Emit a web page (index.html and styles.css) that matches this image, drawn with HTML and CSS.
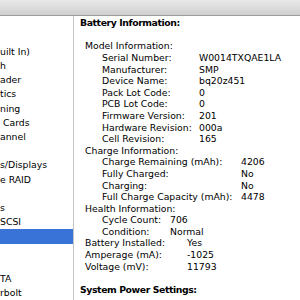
FILE: index.html
```html
<!DOCTYPE html>
<html lang="en">
  <head>
    <meta charset="UTF-8" />
    <meta name="viewport" content="width=device-width, initial-scale=1.0" />
    <title>System Information - Power</title>
    <link rel="stylesheet" href="styles.css">
  </head>
  <body>
    <div class="toolbar"></div>

    <div class="window">
      <ul class="sidebar">
        <li></li>
        <li>uilt In)</li>
        <li>h</li>
        <li>ader</li>
        <li>tics</li>
        <li>ning</li>
        <li>&nbsp;Cards</li>
        <li>annel</li>
        <li></li>
        <li>s/Displays</li>
        <li>e RAID</li>
        <li></li>
        <li>s</li>
        <li>SCSI</li>
        <li class="selected"></li>
        <li></li>
        <li></li>
        <li>TA</li>
        <li>rbolt</li>
      </ul>

      <div class="details">
        <h2>Battery Information:</h2>
        <div class="spacer"></div>

        <div class="group">
          <div class="group-title">Model Information:</div>
          <dl class="pairs model">
            <div class="row"><dt>Serial Number:</dt><dd>W0014TXQAE1LA</dd></div>
            <div class="row"><dt>Manufacturer:</dt><dd>SMP</dd></div>
            <div class="row"><dt>Device Name:</dt><dd>bq20z451</dd></div>
            <div class="row"><dt>Pack Lot Code:</dt><dd>0</dd></div>
            <div class="row"><dt>PCB Lot Code:</dt><dd>0</dd></div>
            <div class="row"><dt>Firmware Version:</dt><dd>201</dd></div>
            <div class="row"><dt>Hardware Revision:</dt><dd>000a</dd></div>
            <div class="row"><dt>Cell Revision:</dt><dd>165</dd></div>
          </dl>
        </div>

        <div class="group">
          <div class="group-title">Charge Information:</div>
          <dl class="pairs charge">
            <div class="row"><dt>Charge Remaining (mAh):</dt><dd>4206</dd></div>
            <div class="row"><dt>Fully Charged:</dt><dd>No</dd></div>
            <div class="row"><dt>Charging:</dt><dd>No</dd></div>
            <div class="row"><dt>Full Charge Capacity (mAh):</dt><dd>4478</dd></div>
          </dl>
        </div>

        <div class="group">
          <div class="group-title">Health Information:</div>
          <dl class="pairs health">
            <div class="row"><dt>Cycle Count:</dt><dd>706</dd></div>
            <div class="row"><dt>Condition:</dt><dd>Normal</dd></div>
          </dl>
        </div>

        <dl class="pairs battery">
          <div class="row"><dt>Battery Installed:</dt><dd>Yes</dd></div>
          <div class="row"><dt>Amperage (mA):</dt><dd>-1025</dd></div>
          <div class="row"><dt>Voltage (mV):</dt><dd>11793</dd></div>
        </dl>

        <div class="spacer"></div>
        <h2>System Power Settings:</h2>
      </div>
    </div>
  </body>
</html>
```

FILE: styles.css
```css
* {
  box-sizing: border-box;
  margin: 0;
  padding: 0;
}

body {
  width: 300px;
  height: 300px;
  overflow: hidden;
  background: #fff;
  color: #000;
  font-family: "DejaVu Sans", sans-serif;
  font-size: 9.3px;
}

.toolbar {
  height: 16px;
  background: linear-gradient(#e9e9e9, #cfcfcf);
  border-bottom: 1px solid #9c9c9c;
}

.window {
  display: flex;
  height: 284px;
}

/* source list on the left */
.sidebar {
  list-style: none;
  width: 74px;
  flex-shrink: 0;
  border-right: 1px solid #c4c4c4;
  padding-top: 14.7px;
  overflow: hidden;
}

.sidebar li {
  height: 14.2px;
  line-height: 14.2px;
  white-space: nowrap;
}

.sidebar li.selected {
  background: #3a73d8;
}

/* detail pane */
.details {
  flex: 1;
  padding: 1.2px 0 0 6px;
  line-height: 11.6px;
  white-space: nowrap;
}

.details h2 {
  font-size: 9.3px;
  font-weight: bold;
  letter-spacing: -0.4px;
}

.spacer {
  height: 11.6px;
}

.group-title {
  padding-left: 5px;
}

.pairs .row {
  display: flex;
}

.pairs dt {
  flex-shrink: 0;
}

.group .pairs {
  padding-left: 22px;
}

.model dt {
  width: 97px;
}

.charge dt {
  width: 139px;
}

.health dt {
  width: 68px;
}

.battery {
  padding-left: 5px;
}

.battery dt {
  width: 102px;
}
```
